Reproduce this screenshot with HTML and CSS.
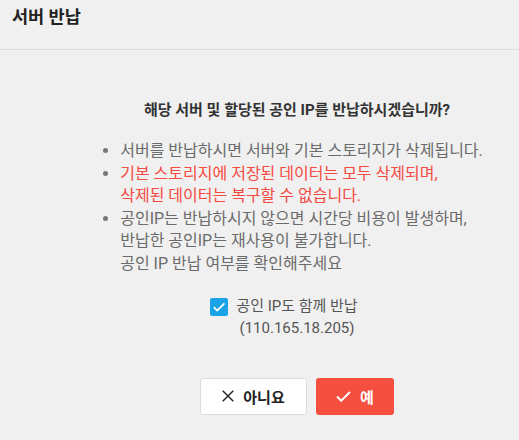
FILE: index.html
```html
<!DOCTYPE html>
<html lang="ko">
<head>
  <meta charset="UTF-8">
  <title>서버 반납</title>
  <link rel="stylesheet" href="styles.css">
</head>
<body>
  <div class="dialog">
    <div class="dialog-header">
      <h1>서버 반납</h1>
    </div>
    <div class="dialog-body">
      <p class="question">해당 서버 및 할당된 공인 IP를 반납하시겠습니까?</p>
      <ul class="notes">
        <li>서버를 반납하시면 서버와 기본 스토리지가 삭제됩니다.</li>
        <li class="warn">기본 스토리지에 저장된 데이터는 모두 삭제되며,<br>삭제된 데이터는 복구할 수 없습니다.</li>
        <li>공인IP는 반납하시지 않으면 시간당 비용이 발생하며,<br>반납한 공인IP는 재사용이 불가합니다.<br>공인 IP 반납 여부를 확인해주세요</li>
      </ul>
      <label class="check">
        <span class="box">
          <svg width="14" height="14" viewBox="0 0 14 14"><path d="M1.8 7.2l3.4 3.4L12.4 3.4" fill="none" stroke="#fff" stroke-width="1.8"/></svg>
        </span>
        <span class="check-text">공인 IP도 함께 반납<br>(110.165.18.205)</span>
      </label>
      <div class="actions">
        <button class="btn btn-no">
          <svg width="12" height="12" viewBox="0 0 12 12"><path d="M0.7 0.7l10.6 10.6M11.3 0.7L0.7 11.3" stroke="#2a2a2a" stroke-width="1.5"/></svg>
          아니요
        </button>
        <button class="btn btn-yes">
          <svg width="15" height="11" viewBox="0 0 15 11"><path d="M1 5.5l4.2 4.2L14 1" fill="none" stroke="#fff" stroke-width="2"/></svg>
          예
        </button>
      </div>
    </div>
  </div>
</body>
</html>
```

FILE: styles.css
```css
* {
  box-sizing: border-box;
  margin: 0;
  padding: 0;
  font-family: Roboto, 'Noto Sans CJK KR', sans-serif;
  font-variant-east-asian: full-width;
}

body {
  background-color: #f0f0f0;
  width: 519px;
  height: 440px;
  overflow: hidden;
}

.dialog-header {
  height: 50px;
  padding: 5px 12px 0;
  border-bottom: 1px solid #dddddd;
}

.dialog-header h1 {
  font-size: 17.5px;
  font-weight: 700;
  color: #222;
  line-height: 24px;
}

.dialog-body {
  padding: 50px 0 0 75px;
  display: flex;
  flex-direction: column;
  align-items: center;
}

.question {
  font-size: 15px;
  font-weight: 700;
  color: #333;
  line-height: 20px;
}

.notes {
  margin: 20px 11px 0 0;
  padding-left: 20px;
  font-size: 16px;
  line-height: 22.6px;
  color: #6b6b6b;
}

.notes li::marker {
  color: #777;
}

.notes .warn {
  color: #f44a3f;
}

.check {
  margin: 19px 26px 0 0;
  display: flex;
  align-items: flex-start;
  gap: 8px;
  font-size: 15px;
  color: #555;
  line-height: 22px;
}

.box {
  width: 18px;
  height: 18px;
  margin-top: 3px;
  background: #1aa3e6;
  border-radius: 2px;
  display: flex;
  align-items: center;
  justify-content: center;
}

.check-text {
  text-align: center;
}

.actions {
  margin-top: 39px;
  display: flex;
  gap: 9px;
}

.btn {
  height: 37px;
  border-radius: 3px;
  font-size: 15px;
  font-weight: 700;
  display: flex;
  align-items: center;
  justify-content: center;
  gap: 9px;
  cursor: pointer;
}

.btn-no {
  width: 107px;
  background: #fff;
  border: 1px solid #dddddd;
  color: #222;
}

.btn-yes {
  width: 78px;
  background: #f5503f;
  border: none;
  color: #fff;
}
```
